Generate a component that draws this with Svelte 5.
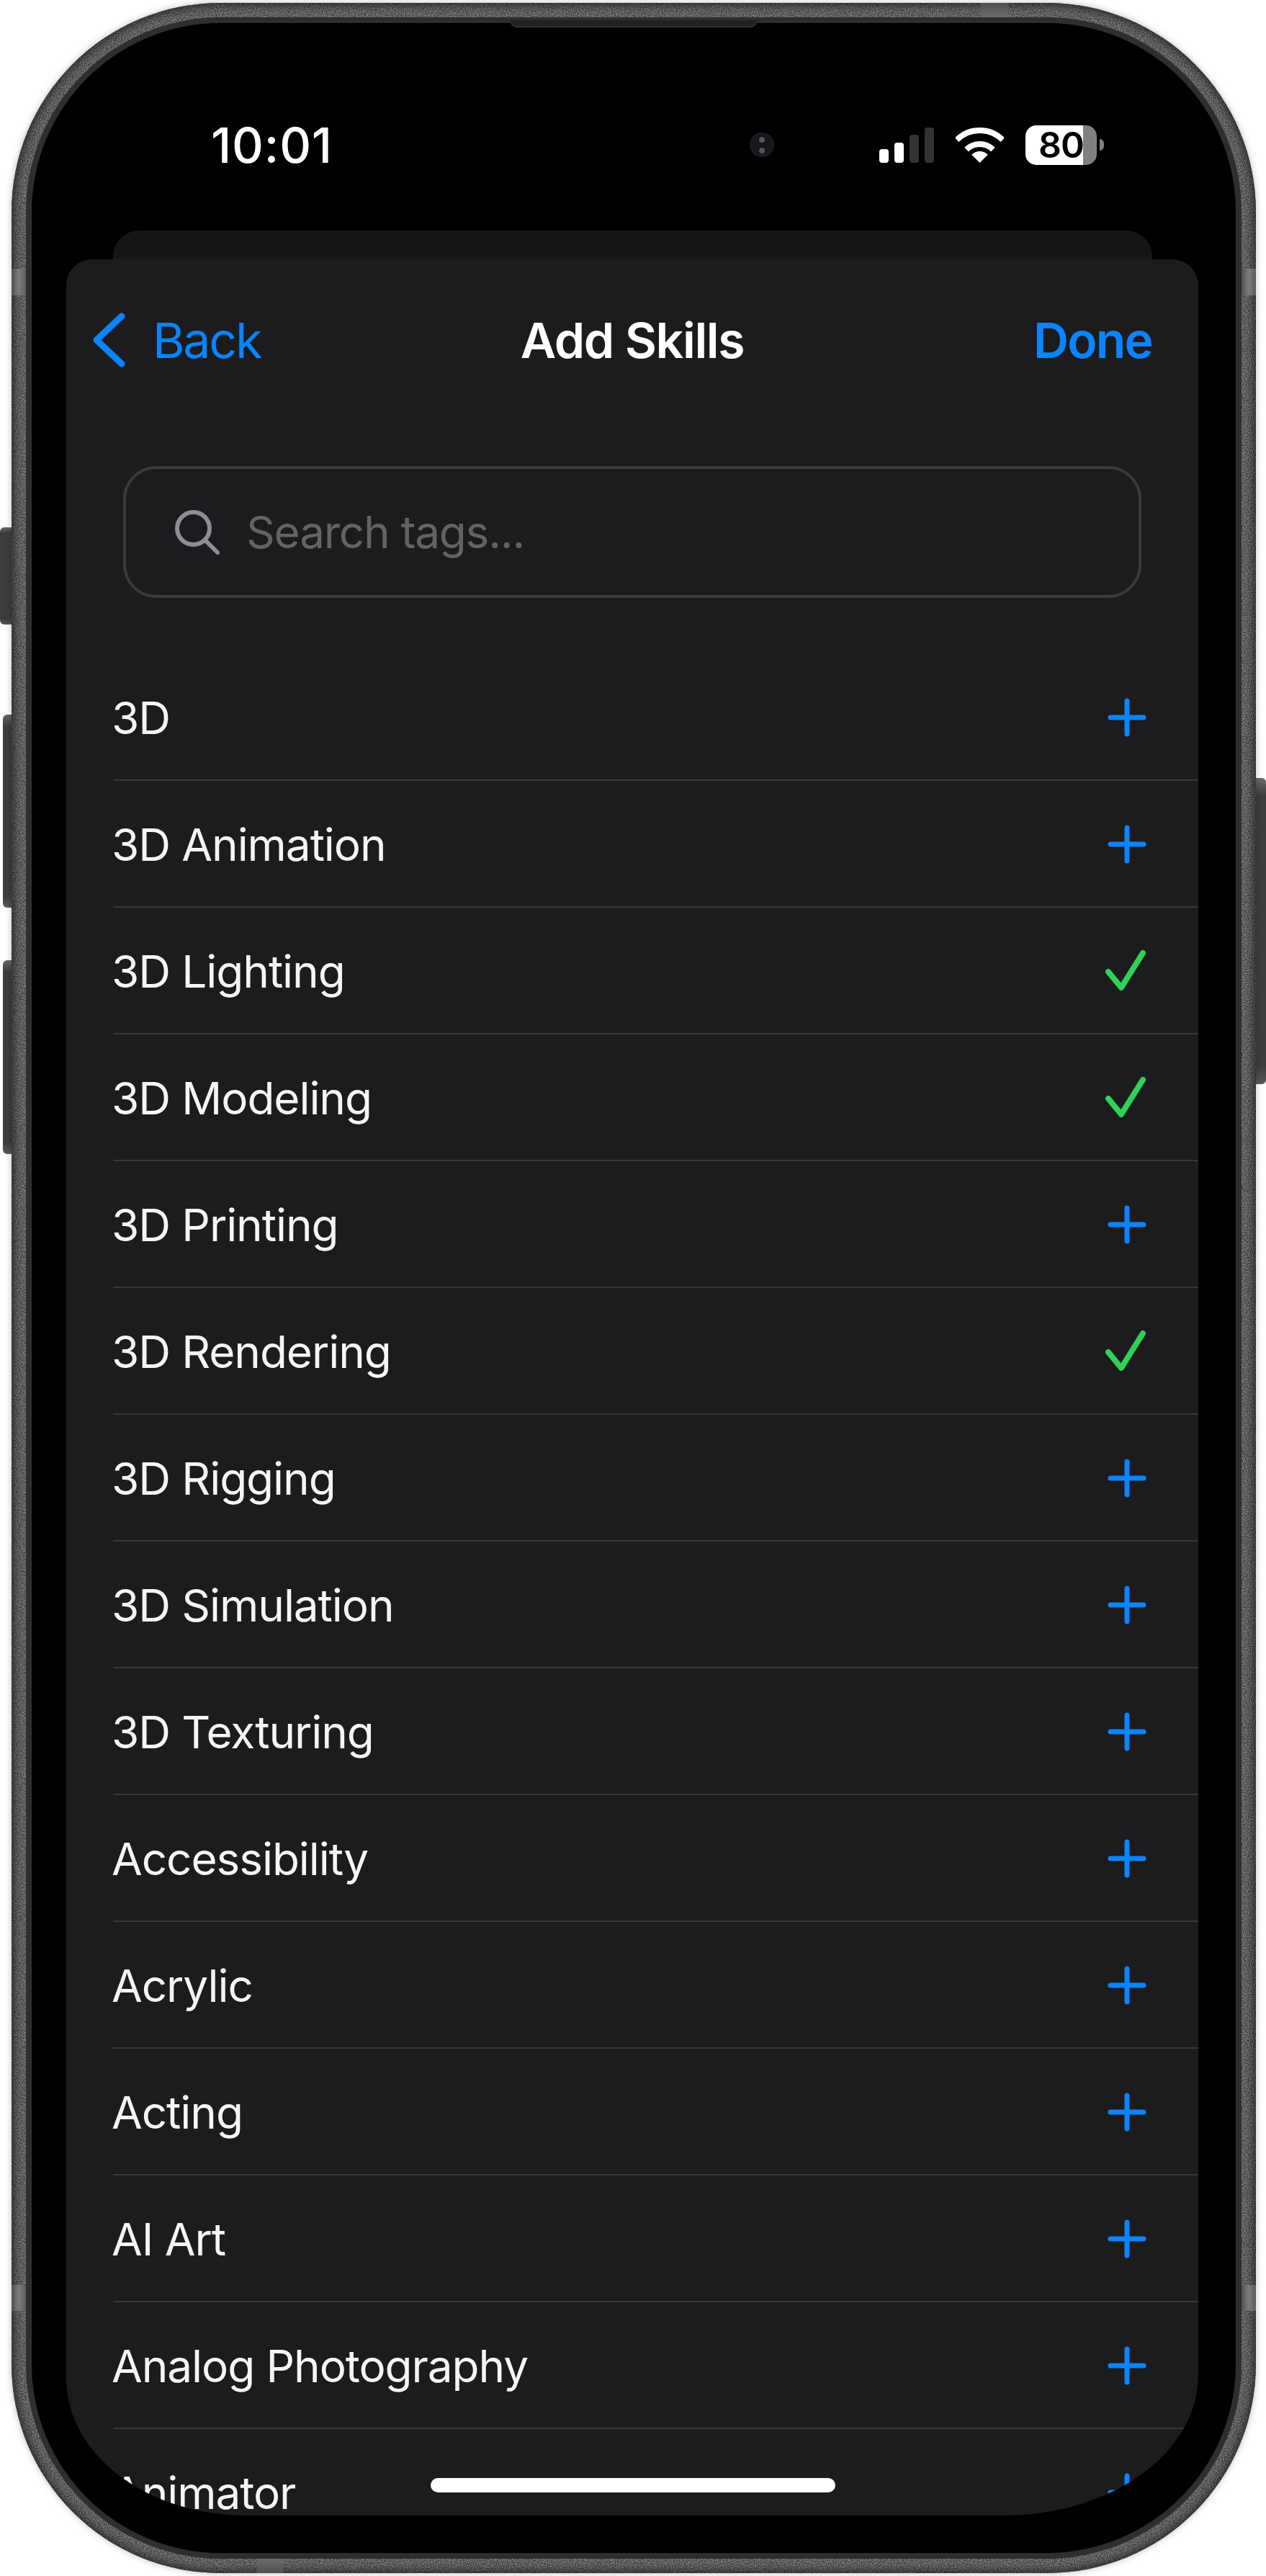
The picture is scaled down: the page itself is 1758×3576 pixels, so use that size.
<script lang="ts">
  const skills = [
    { name: '3D', added: false },
    { name: '3D Animation', added: false },
    { name: '3D Lighting', added: true },
    { name: '3D Modeling', added: true },
    { name: '3D Printing', added: false },
    { name: '3D Rendering', added: true },
    { name: '3D Rigging', added: false },
    { name: '3D Simulation', added: false },
    { name: '3D Texturing', added: false },
    { name: 'Accessibility', added: false },
    { name: 'Acrylic', added: false },
    { name: 'Acting', added: false },
    { name: 'AI Art', added: false },
    { name: 'Analog Photography', added: false },
    { name: 'Animator', added: false },
  ];
</script>

<div class="page">
  <span class="side-btn action"></span>
  <span class="side-btn vol-up"></span>
  <span class="side-btn vol-down"></span>
  <span class="side-btn power"></span>

  <div class="phone">
    <svg class="noise" aria-hidden="true">
      <filter id="grain" x="0" y="0" width="100%" height="100%" color-interpolation-filters="sRGB">
        <feTurbulence type="fractalNoise" baseFrequency="0.7" numOctaves="2" seed="4" />
        <feColorMatrix values="0.7 0 0 0 0.03 0.7 0 0 0 0.03 0.7 0 0 0 0.03 0 0 0 0 1" />
      </filter>
      <rect width="100%" height="100%" filter="url(#grain)" />
    </svg>
    <span class="edge"></span>
    <span class="band band-left"></span>
    <span class="band band-right"></span>
    <span class="band band-left-low"></span>
    <span class="band band-right-low"></span>
    <span class="band band-top"></span>
    <span class="band band-bottom"></span>

    <div class="bezel">
      <span class="speaker"></span>
      <div class="screen">
        <div class="status">
          <span class="time">10:01</span>
          <span class="camera"><i></i><i></i></span>
          <span class="signal">
            <i class="on b1"></i>
            <i class="on b2"></i>
            <i class="b3"></i>
            <i class="b4"></i>
          </span>
          <svg class="wifi" width="67" height="49" viewBox="0 0 67 49" fill="none">
            <path d="M1.7 17.2A45 45 0 0 1 65.3 17.2" stroke="#fff" stroke-width="8" />
            <path d="M15.1 30.6A26 26 0 0 1 51.9 30.6" stroke="#fff" stroke-width="8" />
            <path d="M33.5 49L22.2 37.7A16 16 0 0 1 44.8 37.7Z" fill="#fff" />
          </svg>
          <span class="battery"><span class="level">80</span><i class="nub"></i></span>
        </div>

        <div class="sheet-behind"></div>
        <div class="sheet">
          <header>
            <button class="back">
              <svg width="45" height="76" viewBox="0 0 45 76" fill="none">
                <path d="M40 5L5 38L40 71" stroke="#0a84ff" stroke-width="9" stroke-linecap="round" stroke-linejoin="round" />
              </svg>
              <span>Back</span>
            </button>
            <h1>Add Skills</h1>
            <button class="done">Done</button>
          </header>

          <div class="search">
            <svg width="62" height="62" viewBox="0 0 62 62" fill="none">
              <circle cx="25.5" cy="25.5" r="22.5" stroke="#8e8e93" stroke-width="6" />
              <path d="M42 42L59 59" stroke="#8e8e93" stroke-width="6" stroke-linecap="round" />
            </svg>
            <span class="placeholder">Search tags...</span>
          </div>

          <ul>
            {#each skills as skill}
              <li>
                <span class="name">{skill.name}</span>
                {#if skill.added}
                  <svg width="60" height="60" viewBox="0 0 60 60" fill="none">
                    <path d="M4 31L22 53L52 5" stroke="#30d158" stroke-width="8" stroke-linecap="round" stroke-linejoin="round" />
                  </svg>
                {:else}
                  <svg width="60" height="60" viewBox="0 0 60 60" fill="none">
                    <path d="M30 7V53M7 30H53" stroke="#0a84ff" stroke-width="7" stroke-linecap="round" />
                  </svg>
                {/if}
              </li>
            {/each}
          </ul>

          <span class="home"></span>
        </div>
      </div>
    </div>
  </div>
</div>

<style>
  :global(body) {
    background: #fff;
  }

  .page {
    position: relative;
    width: 1758px;
    height: 3576px;
    padding: 4px 14px 4px 16px;
    box-sizing: border-box;
    overflow: hidden;
    font-family: Inter, 'Liberation Sans', sans-serif;
  }

  .side-btn {
    position: absolute;
    background: linear-gradient(#6a6a6a, #3c3c3e 6%, #3c3c3e 94%, #5a5a5a);
    border-radius: 6px 0 0 6px;
    left: 4px;
    width: 12px;
  }
  .action {
    left: 0;
    width: 16px;
    top: 732px;
    height: 135px;
  }
  .vol-up {
    top: 992px;
    height: 268px;
  }
  .vol-down {
    top: 1333px;
    height: 269px;
  }
  .power {
    left: 1744px;
    width: 14px;
    top: 1080px;
    height: 425px;
    border-radius: 0 6px 6px 0;
  }

  .phone {
    position: relative;
    height: 100%;
    padding: 20px;
    box-sizing: border-box;
    border-radius: 290px;
    overflow: hidden;
    background: #5c5c5c;
    filter: drop-shadow(0 0 5px rgba(0, 0, 0, 0.25));
  }

  .noise {
    position: absolute;
    inset: 0;
    width: 100%;
    height: 100%;
  }

  .edge {
    position: absolute;
    inset: 0;
    border-radius: inherit;
    box-shadow: inset 0 0 14px 3px rgba(20, 20, 20, 0.8);
  }

  .band {
    position: absolute;
    background: linear-gradient(to right, #505052, #7c7c7e 50%, #5c5c5e);
  }
  .band-left,
  .band-right,
  .band-left-low,
  .band-right-low {
    width: 20px;
  }
  .band-left {
    left: 0;
    top: 369px;
    height: 37px;
  }
  .band-right {
    right: 0;
    top: 369px;
    height: 37px;
  }
  .band-left-low {
    left: 0;
    top: 3168px;
    height: 36px;
  }
  .band-right-low {
    right: 0;
    top: 3168px;
    height: 36px;
  }
  .band-top {
    top: 0;
    left: 1346px;
    width: 38px;
    height: 20px;
    background: linear-gradient(#505052, #6c6c6e);
  }
  .band-bottom {
    bottom: 0;
    left: 341px;
    width: 36px;
    height: 20px;
    background: linear-gradient(#6c6c6e, #505052);
  }

  .bezel {
    position: relative;
    height: 100%;
    padding: 8px;
    box-sizing: border-box;
    border-radius: 270px;
    background: #2e2e2e;
  }

  .speaker {
    position: absolute;
    top: 4px;
    left: 672px;
    width: 344px;
    height: 9px;
    background: #222;
    border-bottom: 1px solid #4a4a4a;
    border-radius: 0 0 10px 10px;
    z-index: 1;
  }

  .screen {
    display: flex;
    flex-direction: column;
    height: 100%;
    border-radius: 262px;
    background: #000;
    overflow: hidden;
  }

  .status {
    display: flex;
    align-items: center;
    flex: none;
    height: 288px;
    padding: 50px 183px 0 249px;
    box-sizing: border-box;
    color: #fff;
  }

  .time {
    font-size: 68px;
    font-weight: 500;
    letter-spacing: 0.8px;
    margin-right: auto;
  }

  .camera {
    display: flex;
    flex-direction: column;
    align-items: center;
    justify-content: center;
    gap: 7px;
    width: 34px;
    height: 34px;
    margin-right: 146px;
    border-radius: 50%;
    background: radial-gradient(circle, #15161a 55%, #23252b 80%, #0a0a0c);
  }
  .camera i {
    width: 8px;
    height: 8px;
    border-radius: 50%;
    background: #555;
  }

  .signal {
    display: flex;
    align-items: flex-end;
    gap: 8px;
    height: 49px;
    margin-right: 30px;
  }
  .signal i {
    width: 13px;
    border-radius: 4px;
    background: #333;
  }
  .signal .on {
    background: #fff;
  }
  .b1 {
    height: 19px;
  }
  .b2 {
    height: 28px;
  }
  .b3 {
    height: 39px;
  }
  .b4 {
    height: 49px;
  }

  .wifi {
    margin-right: 30px;
  }

  .battery {
    display: flex;
    align-items: center;
    gap: 4px;
  }
  .level {
    width: 99px;
    height: 55px;
    box-sizing: border-box;
    padding-left: 18px;
    border-radius: 15px;
    background: linear-gradient(to right, #fff 80px, #808080 80px);
    color: #000;
    font-size: 50px;
    font-weight: 600;
    line-height: 55px;
    letter-spacing: -1px;
  }
  .nub {
    width: 6px;
    height: 16px;
    border-radius: 0 8px 8px 0;
    background: #808080;
  }

  .sheet-behind {
    flex: none;
    height: 40px;
    margin: 0 116px 0 113px;
    border-radius: 36px 36px 0 0;
    background: #161618;
  }

  .sheet {
    position: relative;
    flex: 1;
    min-height: 0;
    margin: 0 52px 52px 48px;
    background: #1c1c1e;
    border-radius: 36px 36px 270px 250px / 36px 36px 195px 190px;
    overflow: hidden;
  }

  header {
    display: grid;
    grid-template-columns: 1fr auto 1fr;
    align-items: center;
    height: 224px;
    padding: 0 37px;
  }

  button {
    padding: 0;
    border: none;
    background: none;
    font: inherit;
    color: #0a84ff;
  }

  .back {
    display: flex;
    align-items: center;
    gap: 38px;
    font-size: 68px;
    letter-spacing: -2.2px;
  }

  h1 {
    margin: 0;
    color: #fff;
    font-size: 68px;
    font-weight: 600;
    letter-spacing: -1.35px;
  }

  .done {
    justify-self: end;
    margin-right: 27px;
    font-size: 68px;
    font-weight: 600;
    letter-spacing: -1.8px;
  }

  .search {
    display: flex;
    align-items: center;
    gap: 37px;
    height: 183px;
    margin: 63px 79px 78px;
    padding-left: 68px;
    box-sizing: border-box;
    border: 4px solid #3a3a3c;
    border-radius: 46px;
  }

  .placeholder {
    color: #636366;
    font-size: 62px;
    letter-spacing: -1.2px;
  }

  ul {
    margin: 0 0 0 65px;
    padding: 0;
    list-style: none;
  }

  li {
    display: flex;
    align-items: center;
    justify-content: space-between;
    height: 176px;
    padding: 2px 69px 0 0;
    box-sizing: border-box;
    border-bottom: 2px solid #38383a;
    color: #f5f5f7;
    font-size: 62px;
    letter-spacing: -1.05px;
  }

  .name {
    margin-left: -2px;
  }

  .home {
    position: absolute;
    left: 506px;
    bottom: 32px;
    width: 562px;
    height: 20px;
    border-radius: 10px;
    background: #fff;
  }
</style>
